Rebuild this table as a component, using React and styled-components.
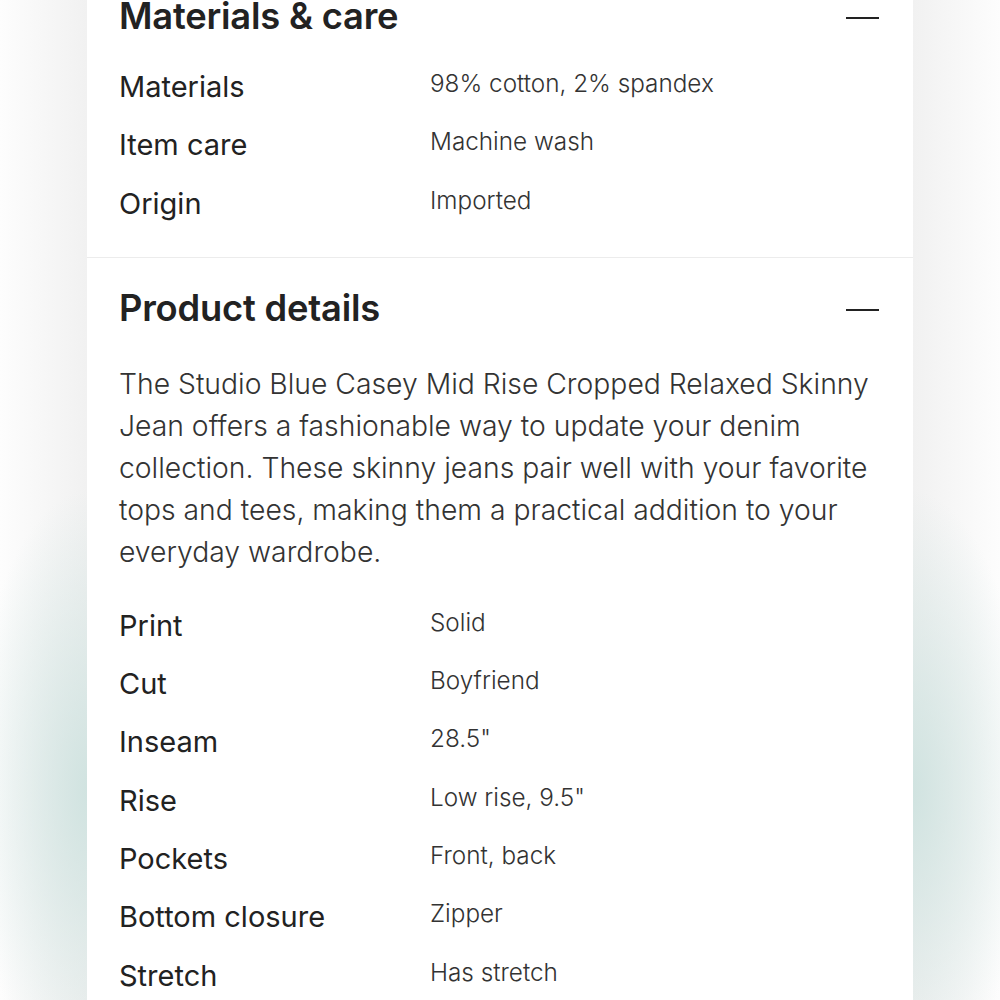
import React from "react";
import styled, { createGlobalStyle } from "styled-components";

const Global = createGlobalStyle`
  html, body { margin: 0; padding: 0; }
  body {
    width: 1000px;
    height: 1000px;
    overflow: hidden;
    font-family: Inter, "Noto Sans", sans-serif;
    color: #222;
    background:
      radial-gradient(ellipse 120px 300px at 90px 790px, rgba(206, 226, 223, 0.95), rgba(206, 226, 223, 0) 100%),
      radial-gradient(ellipse 120px 300px at 910px 790px, rgba(206, 226, 223, 0.95), rgba(206, 226, 223, 0) 100%),
      linear-gradient(to right, #fdfdfd 0px, #f1f1f1 87px, #f1f1f1 913px, #fdfdfd 1000px);
  }
`;

const Page = styled.div`
  display: flex;
  justify-content: center;
  height: 1000px;
`;

const Panel = styled.main`
  width: 826px;
  background: #fff;
  margin-top: -8px;
`;

const Section = styled.section`
  padding: ${(p) => p.$top || 0}px 34px ${(p) => p.$bottom || 0}px 32px;
  border-bottom: ${(p) => (p.$divided ? "1px solid #ececec" : "none")};
`;

const Header = styled.div`
  display: flex;
  align-items: center;
  justify-content: space-between;
  height: 48px;
`;

const Title = styled.h2`
  margin: 0;
  font-size: 36.3px;
  font-weight: 600;
  line-height: 48px;
  color: #222;
  letter-spacing: -0.2px;
`;

const Collapse = styled.span`
  display: block;
  width: 33px;
  height: 2px;
  background: #222;
  margin-top: 4px;
`;

const Rows = styled.div`
  display: flex;
  flex-direction: column;
  margin-top: ${(p) => p.$top || 0}px;
`;

const Row = styled.div`
  display: grid;
  grid-template-columns: 311px 1fr;
  height: 58.3px;
`;

const Label = styled.div`
  font-size: 29px;
  line-height: 58px;
  color: #222;
`;

const Value = styled.div`
  font-size: 24.3px;
  line-height: 50px;
  font-weight: 300;
  color: #333;
  align-self: start;
`;

const Description = styled.p`
  margin: 31px 0 0;
  font-size: 28.3px;
  line-height: 42px;
  font-weight: 300;
  color: #333;
`;

const materials = [
  ["Materials", "98% cotton, 2% spandex"],
  ["Item care", "Machine wash"],
  ["Origin", "Imported"],
];

const details = [
  ["Print", "Solid"],
  ["Cut", "Boyfriend"],
  ["Inseam", "28.5\""],
  ["Rise", "Low rise, 9.5\""],
  ["Pockets", "Front, back"],
  ["Bottom closure", "Zipper"],
  ["Stretch", "Has stretch"],
];

function SpecRows({ items, top }) {
  return (
    <Rows $top={top}>
      {items.map(([k, v]) => (
        <Row key={k}>
          <Label>{k}</Label>
          <Value>{v}</Value>
        </Row>
      ))}
    </Rows>
  );
}

export default function App() {
  return (
    <>
      <Global />
      <Page>
        <Panel>
          <Section $divided $bottom={24}>
            <Header>
              <Title>Materials &amp; care</Title>
              <Collapse />
            </Header>
            <SpecRows items={materials} top={18} />
          </Section>
          <Section $top={26}>
            <Header>
              <Title>Product details</Title>
              <Collapse />
            </Header>
            <Description>
              The Studio Blue Casey Mid Rise Cropped Relaxed Skinny Jean offers a
              fashionable way to update your denim collection. These skinny jeans
              pair well with your favorite tops and tees, making them a practical
              addition to your everyday wardrobe.
            </Description>
            <SpecRows items={details} top={24} />
          </Section>
        </Panel>
      </Page>
    </>
  );
}
